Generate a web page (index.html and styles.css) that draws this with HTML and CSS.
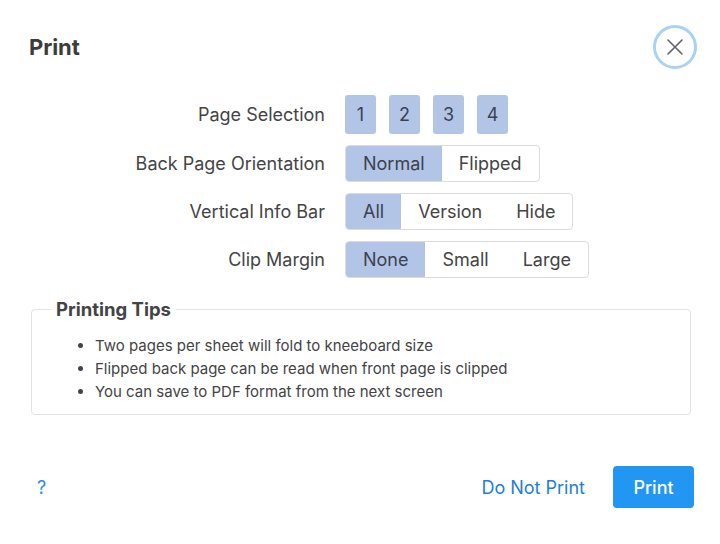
FILE: index.html
```html
<!DOCTYPE html>
<html>
<head>
<meta charset="utf-8">
<link rel="stylesheet" href="styles.css">
</head>
<body>
<div class="dialog">
  <div class="header">
    <h1 class="title">Print</h1>
    <button class="close" aria-label="Close">
      <svg width="18" height="18" viewBox="0 0 18 18"><path d="M2 2L16 16M16 2L2 16" stroke="#5f6368" stroke-width="1.6" fill="none" stroke-linecap="round"/></svg>
    </button>
  </div>
  <div class="form">
    <div class="label">Page Selection</div>
    <div class="pages">
      <span class="page">1</span><span class="page">2</span><span class="page">3</span><span class="page">4</span>
    </div>
    <div class="label">Back Page Orientation</div>
    <div class="seg"><span class="opt on">Normal</span><span class="opt">Flipped</span></div>
    <div class="label">Vertical Info Bar</div>
    <div class="seg"><span class="opt on">All</span><span class="opt">Version</span><span class="opt">Hide</span></div>
    <div class="label">Clip Margin</div>
    <div class="seg"><span class="opt on">None</span><span class="opt">Small</span><span class="opt">Large</span></div>
  </div>
  <fieldset class="tips">
    <legend>Printing Tips</legend>
    <ul>
      <li>Two pages per sheet will fold to kneeboard size</li>
      <li>Flipped back page can be read when front page is clipped</li>
      <li>You can save to PDF format from the next screen</li>
    </ul>
  </fieldset>
  <div class="footer">
    <span class="help">?</span>
    <div class="actions">
      <button class="link">Do Not Print</button>
      <button class="primary">Print</button>
    </div>
  </div>
</div>
</body>
</html>
```
FILE: styles.css
```css
* { box-sizing: border-box; }
html, body { margin: 0; padding: 0; background: #fff; }
body { font-family: Inter, "Noto Sans", sans-serif; color: #404040; width: 720px; height: 544px; overflow: hidden; }
.dialog { padding: 24px 23px 0 29px; }
.header { display: flex; justify-content: space-between; align-items: center; height: 46px; }
.title { margin: 0; font-size: 22px; font-weight: 700; color: #3c3c3c; letter-spacing: -0.1px; }
.close { width: 44px; height: 44px; border-radius: 50%; border: 3px solid #a9d2f5; background: #fff; display: flex; align-items: center; justify-content: center; padding: 0; }
.form { display: grid; grid-template-columns: 296px auto; column-gap: 20px; row-gap: 11px; align-items: center; justify-items: start; margin-top: 25px; }
.label { justify-self: end; font-size: 18px; color: #444; }
.pages { display: flex; gap: 13px; }
.page { display: flex; align-items: center; justify-content: center; width: 31px; height: 39px; background: #b3c5e6; border-radius: 3px; font-size: 18px; color: #3a4250; }
.seg { display: flex; height: 37px; border: 1px solid #dcdcdc; border-radius: 4px; overflow: hidden; }
.opt { display: flex; align-items: center; padding: 0 17px; font-size: 18px; color: #444; }
.opt.on { background: #b3c5e6; color: #3a4250; }
.tips { margin: 20px 6px 0 2px; border: 1px solid #e3e3e3; border-radius: 4px; padding: 14px 20px 11px; }
.tips legend { font-size: 18.5px; font-weight: 700; color: #444; padding: 0 5px; margin-left: -1px; }
.tips ul { margin: 0; padding-left: 43px; }
.tips li { font-size: 15px; line-height: 23px; color: #444; }
.footer { display: flex; justify-content: space-between; align-items: center; margin-top: 51px; padding-right: 3px; }
.help { font-size: 18px; color: #2a8be0; margin-left: 8px; }
.actions { display: flex; align-items: center; gap: 16px; }
.link { border: none; background: none; font-family: inherit; font-size: 18px; color: #1e7fd6; padding: 0 12px; }
.primary { border: none; background: #2196f3; color: #fff; font-family: inherit; font-size: 18px; font-weight: 500; border-radius: 4px; width: 81px; height: 42px; }
```
